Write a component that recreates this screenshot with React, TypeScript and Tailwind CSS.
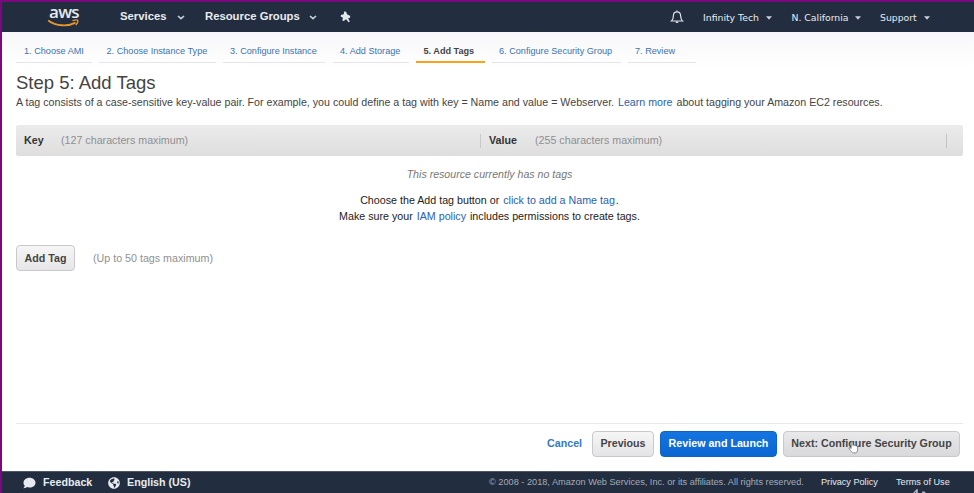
import React from "react";
import { FaComment, FaGlobeAmericas } from "react-icons/fa";

const tabs = [
  { label: "1. Choose AMI", box: "w-[76px] mr-[7px] pl-[8px]" },
  { label: "2. Choose Instance Type", box: "w-[117px] mr-[7px] pl-[7.500px]" },
  { label: "3. Configure Instance", box: "w-[102px] mr-[8px] pl-[7px]" },
  { label: "4. Add Storage", box: "w-[76px] mr-[7px] pl-[7px]" },
  { label: "5. Add Tags", box: "w-[69px] mr-[7px] pl-[7.500px]", active: true },
  { label: "6. Configure Security Group", box: "w-[129px] mr-[7px] pl-[7px]" },
  { label: "7. Review", box: "w-[68px] pl-[7px]" },
];

function Chevron({ className = "" }: { className?: string }) {
  return (
    <svg viewBox="0 0 8 5" className={"h-[5px] w-[8px] shrink-0 " + className} fill="none" stroke="#c9d0d8" strokeWidth="1.600">
      <path d="M1 1l3 2.700 3-2.700" />
    </svg>
  );
}

function Caret() {
  return (
    <svg viewBox="0 0 6 4" className="h-[4px] w-[6px] shrink-0" fill="#c9d0d8">
      <path d="M0 0.300h6L3 3.700z" />
    </svg>
  );
}

function AwsLogo() {
  return (
    <div className="relative h-[24px] w-[34px] shrink-0">
      <span className="absolute left-[2px] top-[-3px] font-['Open_Sans',sans-serif] text-[17px] font-semibold leading-[19px] tracking-[-0.7px] text-[#e6eaee]">aws</span>
      <svg viewBox="0 0 34 10" className="absolute left-0 top-[13px] h-[10px] w-[34px]" fill="none" stroke="#e8942c">
        <path d="M1.200 2.500C9 8.300 21 8.800 28.500 4.600" strokeWidth="1.900" />
        <path d="M25.500 2.700c3-.9 5-.8 5.200-.2s-.3 2.800-2 4.500" strokeWidth="1.400" />
      </svg>
    </div>
  );
}

function Header() {
  return (
    <header className="flex h-[30px] shrink-0 items-center bg-[#222e3f] pl-[45px] text-[#e8ebef]">
      <div className="w-[73px]"><AwsLogo /></div>
      <div className="flex w-[85px] items-center text-[11.300px] font-bold">
        <span className="-mt-[2px] w-[57px] whitespace-nowrap">Services</span>
        <Chevron className="mt-px" />
      </div>
      <div className="flex w-[135px] items-center text-[11.300px] font-bold">
        <span className="-mt-[2px] w-[104px] whitespace-nowrap">Resource Groups</span>
        <Chevron className="mt-px" />
      </div>
      <svg viewBox="0 0 10 11" className="h-[12px] w-[11px]" fill="#e0e8ee">
        <path d="M3.600.4l2 .3.8 2.200L9.400 4.600l-.5 1.900-1.500.1 1.600 3.300-1.200.3-2.200-2.700-2.300 1.700-1.200-.6.500-2.500L.4 4.800l.8-1.400 2.300-.4z" />
      </svg>
      <svg viewBox="0 0 14 14" className="ml-[319px] h-[14px] w-[14px]" fill="none" stroke="#dfe5ea" strokeWidth="1.200">
        <path d="M1.500 11c1.600-1.300 1.800-2.600 1.900-5.200C3.500 3.300 4.800 1.900 7 1.900s3.500 1.400 3.600 3.900c.1 2.600.3 3.900 1.900 5.200zM7 .4v1.500" />
        <path d="M5.500 11.600h3c0 2-3 2-3 0z" fill="#dfe5ea" stroke="none" />
      </svg>
      <nav className="ml-[19px] mt-[1px] flex items-center font-['DejaVu_Sans',sans-serif] text-[9.300px]">
        <div className="flex w-[88.500px] items-center"><span className="w-[63px] whitespace-nowrap">Infinity Tech</span><Caret /></div>
        <div className="flex w-[88.500px] items-center"><span className="w-[63.500px] whitespace-nowrap">N. California</span><Caret /></div>
        <div className="flex items-center"><span className="w-[43.500px] whitespace-nowrap">Support</span><Caret /></div>
      </nav>
    </header>
  );
}

const greyButton = "flex h-[26px] items-center justify-center whitespace-nowrap rounded-[4px] border border-[#c9c9cb] bg-linear-to-b font-bold text-[#444]";

export default function App() {
  return (
    <div className="flex h-[493px] w-[974px] flex-col overflow-hidden border-l-2 border-t-2 border-[#79097c] bg-white font-['Liberation_Sans',Arial,sans-serif] text-[10.700px] text-[#444]">
      <Header />
      <main className="flex grow flex-col bg-linear-to-b from-[#f7f7f9] to-white to-[36px] pl-[14px] pr-[11px]">
        <nav className="flex h-[31px] text-[9.150px] text-[#3b73af]">
          {tabs.map((t) => (
            <div key={t.label} className={"flex shrink-0 items-center justify-start whitespace-nowrap " + t.box + (t.active ? " border-b-2 border-[#f9a31c] pt-[10px] font-bold text-[#444]" : " border-b border-[#e3e4ec] pt-[9px]")}>
              {t.label}
            </div>
          ))}
        </nav>
        <h1 className="mt-[9px] h-[23px] whitespace-nowrap text-[18.500px] leading-[22px]">Step 5: Add Tags</h1>
        <p className="h-[14px] whitespace-nowrap text-[10.670px] leading-[14px]">
          A tag consists of a case-sensitive key-value pair. For example, you could define a tag with key = Name and value = Webserver. <a className="mx-[1px] text-[#2a61b0]">Learn more</a> about tagging your Amazon EC2 resources.
        </p>
        <div className="mt-[16px] flex h-[31px] w-[947px] items-center rounded-[2px] bg-linear-to-b from-[#ebebeb] to-[#dededf] text-[#8f8f91]">
          <b className="w-[45px] pl-[8px] text-[#333]">Key</b>
          <span className="w-[419px] whitespace-nowrap">(127 characters maximum)</span>
          <i className="h-[14px] w-px bg-[#c9c9ca]" />
          <b className="w-[54px] pl-[8px] text-[#333]">Value</b>
          <span className="w-[411px] whitespace-nowrap">(255 characters maximum)</span>
          <i className="h-[14px] w-px bg-[#c3c3c4]" />
        </div>
        <div className="mt-[10px] flex w-[947px] flex-col items-center whitespace-nowrap leading-[16px]">
          <em className="text-[10.620px] text-[#777]">This resource currently has no tags</em>
          <p className="mt-[10px] text-[#222]">Choose the Add tag button or <a className="ml-[1px] text-[#2a61b0]">click to add a Name tag</a><span className="ml-px">.</span></p>
          <p className="text-[#222]">Make sure your <a className="mx-[1px] text-[#2a61b0]">IAM policy</a> includes permissions to create tags.</p>
        </div>
        <div className="mt-[21px] flex items-center">
          <button className={greyButton + " w-[59px] from-[#f6f6f6] to-[#e6e6e8]"}>Add Tag</button>
          <span className="ml-[18px] text-[#8f8f91]">(Up to 50 tags maximum)</span>
        </div>
        <div className="mt-auto flex h-[48px] w-[947px] items-start border-t border-[#e9e9eb] pt-[7px]">
          <a className="ml-[531px] w-[45px] font-bold leading-[25px] text-[#3579bf]">Cancel</a>
          <button className={greyButton + " w-[62px] from-[#f6f6f6] to-[#e4e4e6] pb-px"}>Previous</button>
          <button className="ml-[6px] flex h-[26px] w-[117px] items-center justify-center whitespace-nowrap rounded-[4px] border border-[#1163c0] bg-linear-to-b from-[#1475e0] to-[#0a66d2] pb-px font-bold text-white">Review and Launch</button>
          <button className={greyButton + " relative ml-[6px] w-[177px] from-[#e9e9ea] to-[#d9d9db] pb-px"}>
            Next: Configure Security Group
            <svg viewBox="0 0 12 14" className="absolute left-[64px] top-[9px] h-[13px] w-[11px]" fill="#fff" stroke="#666" strokeWidth=".8">
              <path d="M3.500 8V1.600c0-1.300 1.800-1.300 1.800 0v3.200c.4-.7 1.500-.5 1.700.2.500-.5 1.500-.3 1.700.4.700-.4 1.800-.1 1.800.9v3c0 2-1 3.600-2.500 3.600H6c-1.500 0-3-2.200-4.600-4.300-.8-1.100.6-1.900 2.100-.6z" />
            </svg>
          </button>
        </div>
      </main>
      <footer className="relative flex h-[22px] shrink-0 items-center border-t border-[#4e5864] bg-[#222e3f] pl-[21px] text-[#e8ebef]">
        <FaComment className="h-[12px] w-[13px]" />
        <b className="ml-[7px] w-[65px]">Feedback</b>
        <FaGlobeAmericas className="h-[12px] w-[12px]" />
        <b className="ml-[7px] w-[362px] whitespace-nowrap">English (US)</b>
        <span className="w-[332px] whitespace-nowrap text-[9.200px] text-[#a3abb6]">© 2008 - 2018, Amazon Web Services, Inc. or its affiliates. All rights reserved.</span>
        <a className="w-[75px] whitespace-nowrap text-[9.150px]">Privacy Policy</a>
        <a className="whitespace-nowrap text-[9.150px]">Terms of Use</a>
        <svg viewBox="0 0 16 4" className="absolute bottom-0 left-[911px] h-[4px] w-[16px]" fill="#aeb6bf">
          <path d="M0 4L3.500.2 4.800 0v4H3V2.800L1.800 4zM9.500 2.200l2 .3L13 4H9z" />
        </svg>
      </footer>
    </div>
  );
}
